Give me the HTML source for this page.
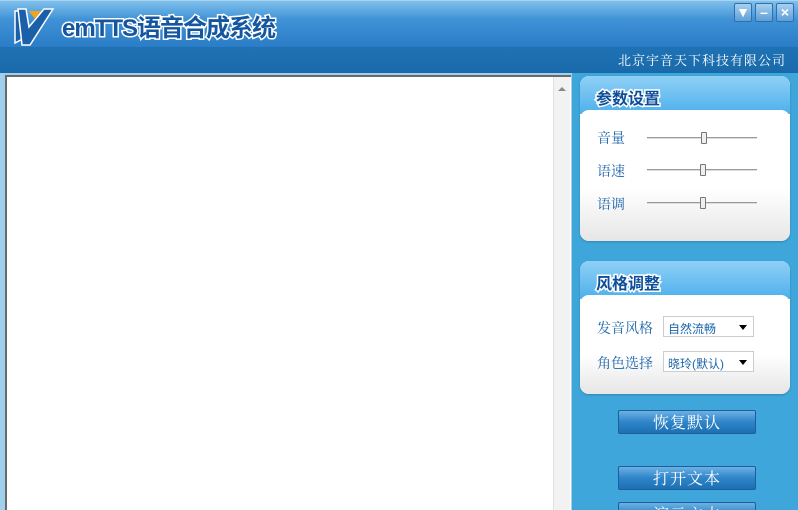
<!DOCTYPE html>
<html style="width:798px;height:510px;overflow:hidden"><head><meta charset="utf-8"><style>
*{margin:0;padding:0;box-sizing:border-box}
body{width:798px;height:510px;overflow:hidden;position:relative;background:#3ea6da;font-family:"Liberation Serif","Noto Serif CJK SC",serif}
.title{position:absolute;left:0;top:0;width:798px;height:47px;background:linear-gradient(#7fc0ec,#3f92d6 40%,#2a7dc6);border-top:1px solid #a8d4f2}
.band{position:absolute;left:0;top:47px;width:798px;height:26px;background:linear-gradient(#1e72b4,#1a6aaa);color:#fff;font-size:13px;text-align:right;padding:3px 12px 0 0;letter-spacing:1px}
.logo{position:absolute;left:14px;top:7px}
.tt{position:absolute;left:62px;top:15px;font-family:"Liberation Sans","Noto Sans CJK SC",sans-serif;font-weight:bold;font-size:24px;line-height:28px;color:#1456a0;-webkit-text-stroke:3px #fff;paint-order:stroke fill;letter-spacing:-1px}
.wb{position:absolute;top:3px;width:18px;height:19px;border:1px solid #2e6fae;background:linear-gradient(#a8d0f0,#5d9ed8);border-radius:2px;color:#fff;font:bold 14px "Liberation Sans",sans-serif;text-align:center;line-height:17px}
.left{position:absolute;left:0;top:73px;width:572px;height:437px;background:#9fd1ee}
.ta{position:absolute;left:5px;top:75px;width:566px;height:435px;background:#fff;border-left:2px solid #6a6a6a;border-top:2px solid #6a6a6a}
.sb{position:absolute;left:553px;top:77px;width:17px;height:433px;background:#f2f2f2;border-left:1px solid #e0e0e0}
.panel{position:absolute;left:580px;width:210px;border-radius:9px;overflow:hidden;background:#fff;box-shadow:0 1px 2px rgba(0,0,0,.2)}
.ph{height:38px;background:linear-gradient(#8fd0f6,#4eb0ec);color:#0c4e99;font:bold 16px "Liberation Sans","Noto Sans CJK SC",sans-serif;padding:9px 0 0 16px;-webkit-text-stroke:3px #fff;paint-order:stroke fill}
.pb{background:linear-gradient(#fff 60%,#e6e6e6);border-radius:9px 9px 0 0;margin-top:-4px;position:relative}
.lab{position:absolute;left:17px;color:#1b64aa;font-size:14px}
.sl{position:absolute;left:67px;width:110px;height:2px;border-top:1px solid #999;border-bottom:1px solid #ddd}
.th{position:absolute;width:6px;height:12px;border:1px solid #777;background:#eee;border-radius:1px;top:-6px}
.sel{position:absolute;left:83px;width:91px;height:21px;border:1px solid #ccc;background:#fff;font-size:12px;color:#1b64aa;padding:3px 0 0 4px;font-family:"Liberation Sans","Noto Sans CJK SC",sans-serif}
.sel:after{content:"";position:absolute;right:6px;top:8px;border:4px solid transparent;border-top:5px solid #000}
.btn{position:absolute;left:618px;width:138px;height:24px;border:1px solid #1c5f9a;border-radius:2px;background:linear-gradient(#6cb1e4,#2f85c8 50%,#1d6fb3);color:#fff;font-size:16px;text-align:center;line-height:25px;letter-spacing:1px}
</style></head><body>
<div class="title"></div>
<svg class="logo" width="42" height="40" viewBox="0 0 42 40"><path d="M1 4h7v24h8L1 36z" fill="#1a5fa8" stroke="#fff" stroke-width="1.5"/><path d="M4 2h8l3 18 L30 2h9L16 38H8z" fill="#1a5fa8" stroke="#fff" stroke-width="1.5"/><path d="M15 4h12l-6 8z" fill="#f2a31c"/></svg>
<div class="tt">emTTS语音合成系统</div>
<div class="wb" style="left:734px">&#9660;</div>
<div class="wb" style="left:755px">–</div>
<div class="wb" style="left:776px">×</div>
<div class="band">北京宇音天下科技有限公司</div>
<div class="left"></div>
<div class="ta"></div>
<div class="sb"><div style="margin:6px 0 0 4px;width:0;height:0;border:4px solid transparent;border-bottom:4px solid #888"></div></div>

<div class="panel" style="top:76px;height:165px">
<div class="ph">参数设置</div>
<div class="pb" style="height:131px">
<div class="lab" style="top:18px">音量</div><div class="sl" style="top:27px"><div class="th" style="left:54px"></div></div>
<div class="lab" style="top:51px">语速</div><div class="sl" style="top:59px"><div class="th" style="left:53px"></div></div>
<div class="lab" style="top:84px">语调</div><div class="sl" style="top:92px"><div class="th" style="left:53px"></div></div>
</div></div>

<div class="panel" style="top:261px;height:133px">
<div class="ph">风格调整</div>
<div class="pb" style="height:99px">
<div class="lab" style="top:23px">发音风格</div><div class="sel" style="top:21px">自然流畅</div>
<div class="lab" style="top:58px">角色选择</div><div class="sel" style="top:56px">晓玲(默认)</div>
</div></div>

<div class="btn" style="top:410px">恢复默认</div>
<div class="btn" style="top:466px">打开文本</div>
<div class="btn" style="top:502px">演示文本</div>
</body></html>
